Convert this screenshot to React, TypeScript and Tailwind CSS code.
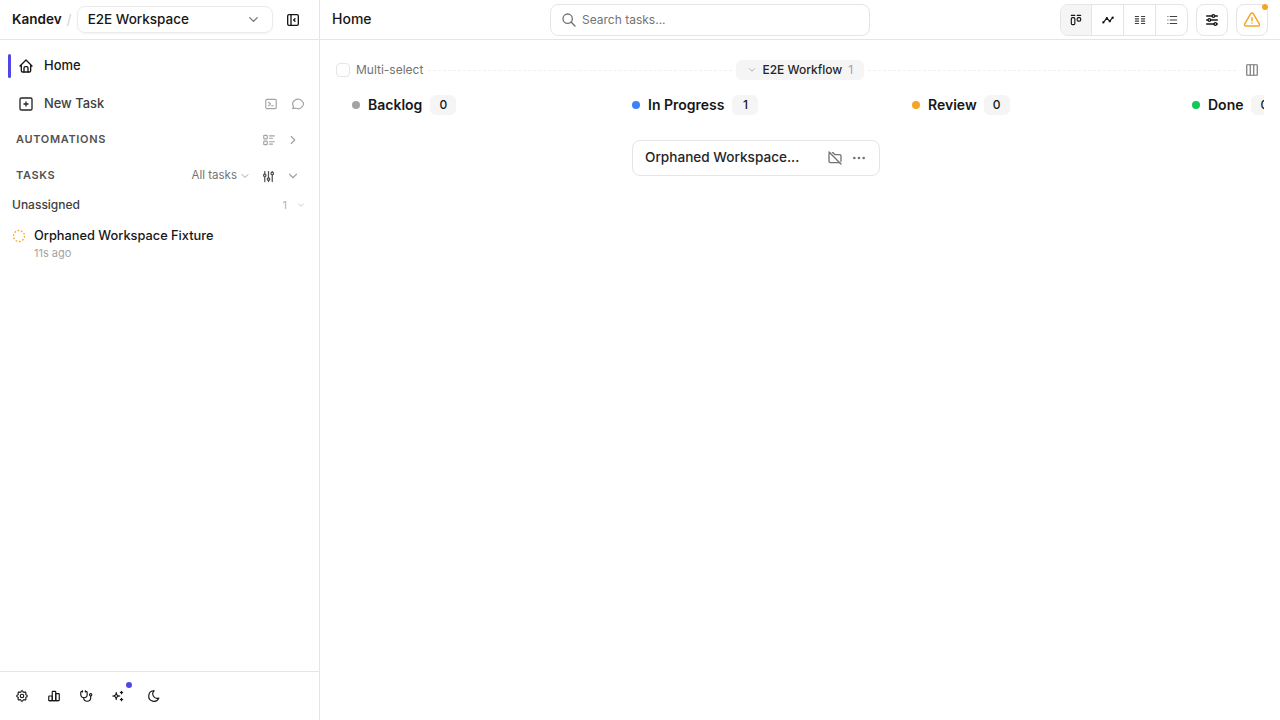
import { TbHome, TbSquarePlus, TbTerminal2, TbMessageCircle, TbLayoutSidebarLeftCollapse, TbChevronDown, TbChevronRight, TbListDetails, TbAdjustments, TbAdjustmentsHorizontal, TbSearch, TbLayoutKanban, TbTimeline, TbColumns, TbList, TbAlertTriangle, TbSettings, TbChartBar, TbStethoscope, TbSparkles, TbMoon, TbFolderOff, TbDots, TbColumns3 } from "react-icons/tb";

function Col({ dot, name, count, gap = "ml-2" }: { dot: string; name: string; count: string; gap?: string }) {
  return (
    <div className="w-[280px] shrink-0 flex items-center pl-4 h-[26px]">
      <span className={`w-2 h-2 rounded-full ${dot}`} />
      <span className="ml-2 text-[14px] font-semibold text-[#171717] leading-none">{name}</span>
      <span className={`${gap} w-[26px] h-5 rounded-md bg-[#f5f5f5] text-[12px] font-medium text-[#171717] flex items-center justify-center shrink-0`}>{count}</span>
    </div>
  );
}

export default function App() {
  return (
    <div className="w-[1280px] h-[720px] overflow-hidden flex bg-white text-[#171717] font-['Inter',sans-serif]">
      <aside className="w-[320px] shrink-0 h-full border-r border-[#e5e5e5] flex flex-col">
        <div className="h-10 shrink-0 border-b border-[#e5e5e5] flex items-center pl-3 pr-[18px]">
          <span className="text-[13.5px] font-semibold leading-none">Kandev</span>
          <span className="ml-[5px] text-[14px] text-[#d4d4d4] leading-none">/</span>
          <div className="ml-[5px] w-[196px] h-[27px] rounded-lg border border-[#ebebeb] shadow-xs flex items-center pl-[10px] pr-[11px] justify-between mb-[1px]">
            <span className="text-[13.5px] font-medium leading-none mt-[1px]">E2E Workspace</span>
            <TbChevronDown className="w-[15px] h-[15px] text-[#737373]" />
          </div>
          <TbLayoutSidebarLeftCollapse className="ml-auto w-4 h-4 text-[#171717]" />
        </div>
        <nav className="flex-1 flex flex-col">
          <div className="mt-[14px] h-6 flex items-center relative pl-[18px]">
            <span className="absolute left-2 top-0 w-[3px] h-6 rounded-sm bg-[#4f46e5]" />
            <TbHome className="w-4 h-4" />
            <span className="ml-[10px] text-[13px] font-medium leading-none mb-[2px]">Home</span>
          </div>
          <div className="mt-[14px] h-6 flex items-center pl-[18px] pr-[14px]">
            <TbSquarePlus className="w-4 h-4 text-[#262626]" />
            <span className="ml-[10px] text-[12.9px] font-medium text-[#404040] leading-none">New Task</span>
            <TbTerminal2 className="ml-auto w-[14px] h-[14px] text-[#a3a3a3]" />
            <TbMessageCircle className="ml-[13px] w-[14px] h-[14px] text-[#a3a3a3]" />
          </div>
          <div className="mt-[12px] h-6 flex items-center pl-4 pr-[19px]">
            <span className="text-[11px] font-semibold tracking-[0.06em] text-[#525252] leading-none mb-[2px]">AUTOMATIONS</span>
            <TbListDetails className="ml-auto w-[14px] h-[14px] text-[#a3a3a3]" />
            <TbChevronRight className="ml-[10px] w-[14px] h-[14px] text-[#a3a3a3]" />
          </div>
          <div className="mt-[12px] h-6 flex items-center pl-4 pr-[19px]">
            <span className="text-[11px] font-semibold tracking-[0.06em] text-[#525252] leading-none mb-[2px]">TASKS</span>
            <span className="ml-auto text-[11.5px] text-[#737373] leading-none">All tasks</span>
            <TbChevronDown className="ml-[2px] w-3 h-3 text-[#a3a3a3]" />
            <TbAdjustments className="ml-[10px] w-[15px] h-[15px] text-[#525252]" />
            <TbChevronDown className="ml-[10px] w-[14px] h-[14px] text-[#a3a3a3]" />
          </div>
          <div className="mt-[5px] h-6 flex items-center pl-3 pr-[13px]">
            <span className="text-[12px] font-medium text-[#404040] leading-none">Unassigned</span>
            <span className="ml-auto text-[11px] text-[#b5b5b5] leading-none">1</span>
            <TbChevronDown className="ml-[9px] w-[10px] h-[10px] text-[#c4c4c4]" />
          </div>
          <div className="mt-[11px] pl-3 flex items-start">
            <svg width="14" height="14" viewBox="0 0 14 14" className="mt-[1px]">
              <circle cx="7" cy="7" r="5.5" fill="none" stroke="#f5a524" strokeWidth="1.3" strokeDasharray="1.7 1.7" />
            </svg>
            <div className="ml-2 flex flex-col">
              <span className="text-[12.8px] font-medium leading-4 text-[#171717]">Orphaned Workspace Fixture</span>
              <span className="mt-[1px] text-[11px] leading-4 text-[#a3a3a3]">11s ago</span>
            </div>
          </div>
        </nav>
        <div className="h-[49px] shrink-0 border-t border-[#e5e5e5] flex items-center pl-[15px] gap-[18px]">
          <TbSettings className="w-[14px] h-[14px]" />
          <TbChartBar className="w-[14px] h-[14px]" />
          <TbStethoscope className="w-[14px] h-[14px]" />
          <div className="relative w-[14px] h-[14px]">
            <TbSparkles className="w-[14px] h-[14px]" />
            <span className="absolute -top-[7px] left-[15px] w-[6px] h-[6px] rounded-full bg-[#4f46e5]" />
          </div>
          <TbMoon className="ml-[4px] w-[14px] h-[14px]" />
        </div>
      </aside>
      <main className="flex-1 min-w-0 flex flex-col">
        <header className="h-10 shrink-0 border-b border-[#e5e5e5] flex items-center pl-3 pr-3 relative">
          <span className="text-[14px] font-medium leading-none w-[218px] mb-[2px]">Home</span>
          <div className="w-[320px] h-8 rounded-lg border border-[#e5e5e5] flex items-center pl-[10px]">
            <TbSearch className="w-4 h-4 text-[#737373]" />
            <span className="ml-[5px] text-[12px] text-[#737373] leading-none">Search tasks...</span>
          </div>
          <div className="ml-auto h-8 flex rounded-lg border border-[#e5e5e5] overflow-hidden">
            <div className="w-[31px] flex items-center justify-center bg-[#f5f5f5] border-r border-[#e5e5e5]"><TbLayoutKanban className="w-[14px] h-[14px]" /></div>
            <div className="w-8 flex items-center justify-center border-r border-[#e5e5e5]"><TbTimeline className="w-[14px] h-[14px]" /></div>
            <div className="w-8 flex items-center justify-center border-r border-[#e5e5e5]"><TbColumns className="w-[14px] h-[14px] text-[#404040]" /></div>
            <div className="w-[31px] flex items-center justify-center"><TbList className="w-[14px] h-[14px] text-[#404040]" /></div>
          </div>
          <div className="ml-2 w-8 h-8 rounded-lg border border-[#e5e5e5] flex items-center justify-center"><TbAdjustmentsHorizontal className="w-4 h-4" /></div>
          <div className="ml-2 w-8 h-8 rounded-lg border border-[#e5e5e5] flex items-center justify-center relative">
            <TbAlertTriangle className="w-[18px] h-[18px] text-[#f5a524]" />
            <span className="absolute -top-[1px] right-[-1px] w-[6px] h-[6px] rounded-full bg-[#f5a524]" />
          </div>
        </header>
        <div className="flex-1 min-h-0 pl-4 pr-4 pt-[19px] flex flex-col">
          <div className="h-[22px] flex items-center">
            <span className="w-[14px] h-[14px] rounded-[4px] border border-[#e5e5e5]" />
            <span className="ml-[6px] text-[12px] text-[#737373] leading-none">Multi-select</span>
            <div className="ml-[5px] w-[304px] border-t border-dashed border-[#f0f0f0]" />
            <div className="mx-[4px] w-[128px] h-5 rounded-md bg-[#f5f5f5] flex items-center pl-[11px]">
              <TbChevronDown className="w-[10px] h-[10px] text-[#a3a3a3]" />
              <span className="ml-[5px] text-[12px] font-medium leading-none text-[#262626]">E2E Workflow</span>
              <span className="ml-[6px] text-[12px] text-[#a3a3a3] leading-none">1</span>
            </div>
            <div className="flex-1 border-t border-dashed border-[#f0f0f0]" />
            <TbColumns3 className="ml-[9px] w-[14px] h-[14px] text-[#737373]" />
            <span className="w-[5px]" />
          </div>
          <div className="mt-[11px] w-[928px] overflow-hidden">
            <div className="flex">
              <Col dot="bg-[#a3a3a3]" name="Backlog" count="0" />
              <Col dot="bg-[#3b82f6]" name="In Progress" count="1" />
              <Col dot="bg-[#f5a524]" name="Review" count="0" gap="ml-[7px]" />
              <Col dot="bg-[#10c95a]" name="Done" count="0" />
            </div>
            <div className="mt-[22px] ml-[296px] w-[248px] h-9 rounded-lg border border-[#e5e5e5] flex items-center pl-3 pr-3">
              <span className="text-[13.6px] font-medium leading-none text-[#262626] mb-[1px]">Orphaned Workspace...</span>
              <TbFolderOff className="ml-auto w-4 h-4 text-[#737373]" />
              <TbDots className="ml-2 w-4 h-4 text-[#737373]" />
            </div>
          </div>
        </div>
      </main>
    </div>
  );
}
